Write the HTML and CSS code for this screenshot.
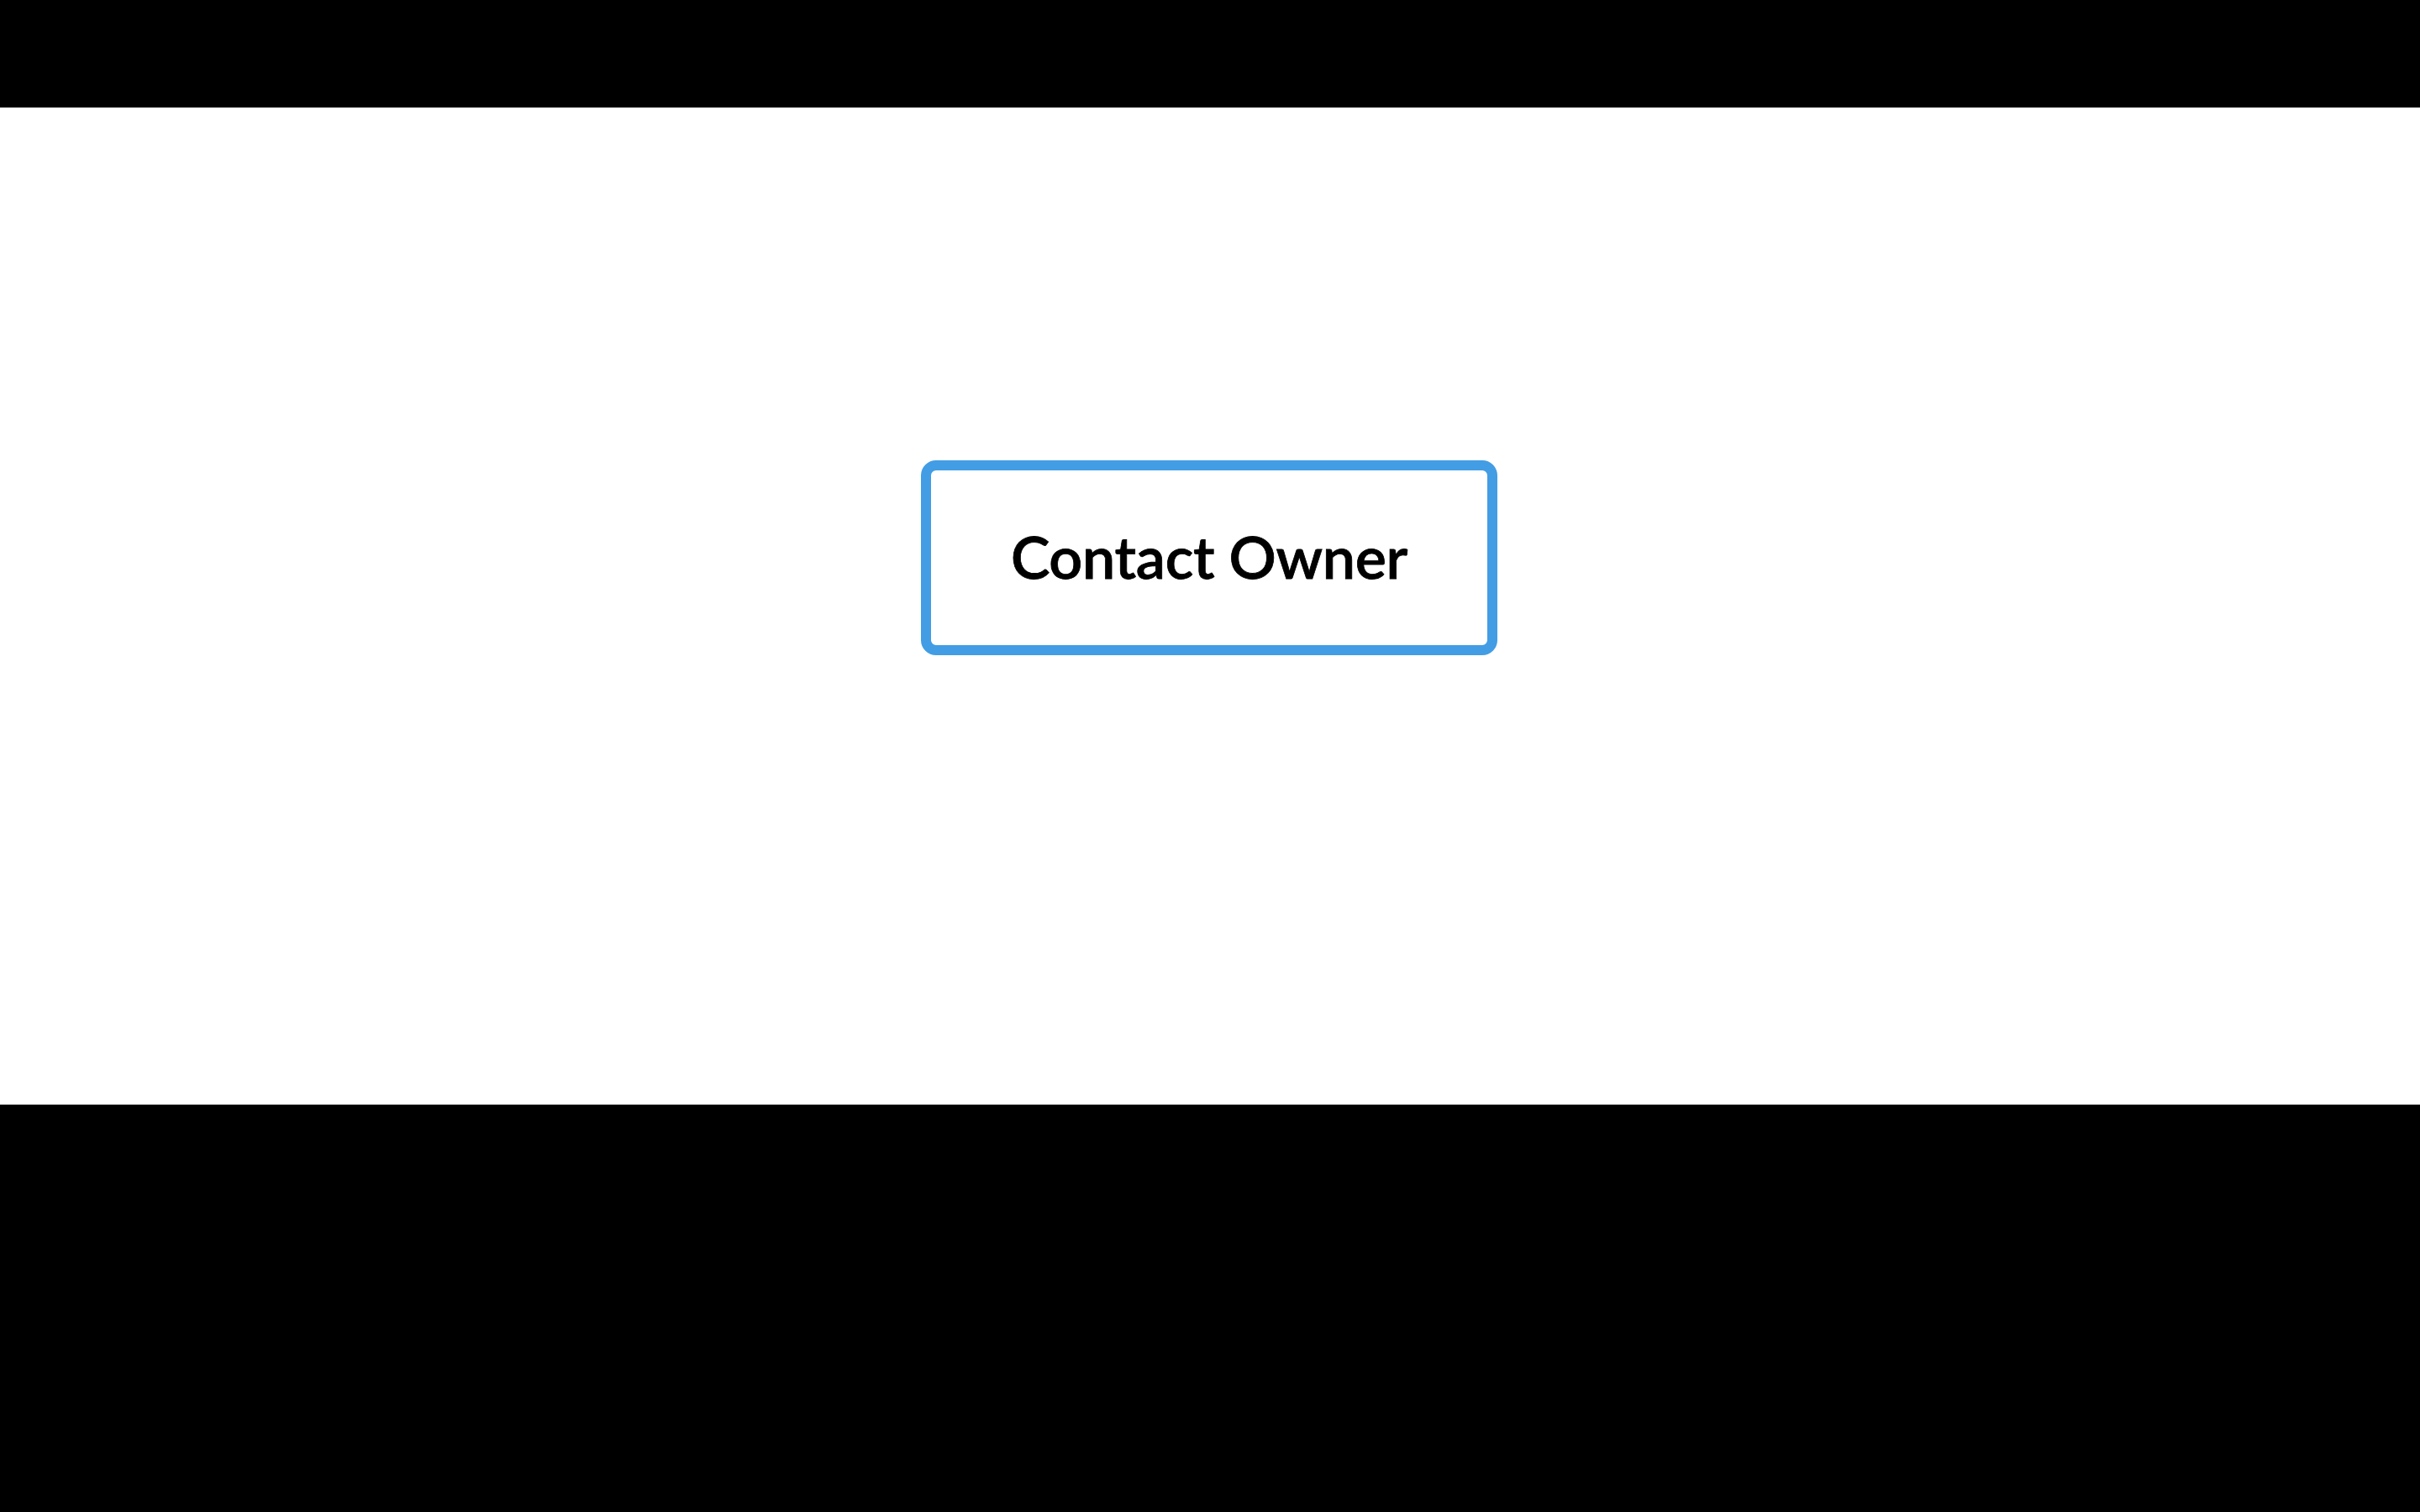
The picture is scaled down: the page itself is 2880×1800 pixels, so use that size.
FILE: index.html
```html
<!DOCTYPE html>
<html lang="en">
<head>
<meta charset="utf-8">
<title>Contact Owner</title>
<link rel="stylesheet" href="styles.css">
</head>
<body>
<div class="top-band"></div>
<main class="stage">
  <button class="contact-btn" type="button">Contact Owner</button>
</main>
<div class="bottom-band"></div>
</body>
</html>
```
FILE: styles.css
```css
html, body {
  margin: 0;
  padding: 0;
  background: #000;
  height: 100%;
}
body {
  display: flex;
  flex-direction: column;
  font-family: Lato, "Open Sans", "Liberation Sans", sans-serif;
}
.top-band {
  height: 128px;
  background: #000;
  flex: none;
}
.stage {
  height: 1187px;
  flex: none;
  background: #fff;
  display: flex;
  flex-direction: column;
  align-items: center;
  padding-top: 420px;
  box-sizing: border-box;
}
.bottom-band {
  flex: 1;
  background: #000;
}
.contact-btn {
  width: 686px;
  height: 232px;
  box-sizing: border-box;
  border: 12px solid #429de4;
  border-radius: 18px;
  background: #fff;
  color: #000;
  font-family: Lato, "Open Sans", "Liberation Sans", sans-serif;
  font-size: 70px;
  font-weight: 600;
  letter-spacing: -0.3px;
  -webkit-text-stroke: 0.8px #000;
  padding: 0 0 4px 0;
  margin-right: 2px;
  cursor: pointer;
}
```
